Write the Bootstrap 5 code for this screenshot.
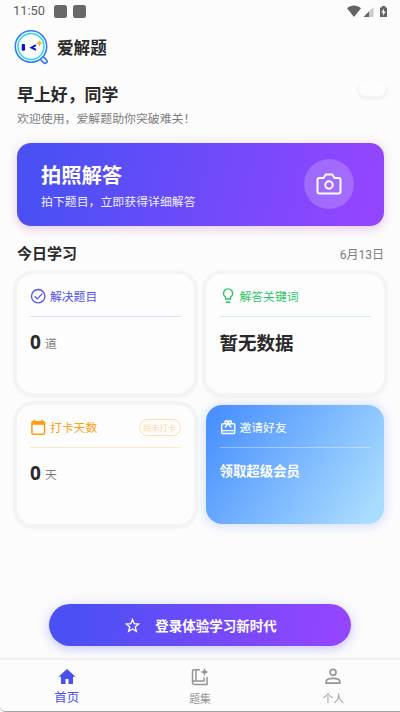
<!DOCTYPE html>
<html lang="zh-CN">
<head>
<meta charset="utf-8">
<meta name="viewport" content="width=device-width, initial-scale=1">
<title>爱解题</title>
<link href="https://cdn.jsdelivr.net/npm/bootstrap@5.3.0/dist/css/bootstrap.min.css" rel="stylesheet">
<style>
html, body { height: 712px; overflow: hidden; }
body { background: #fcfcfc; color: #292929; font-family: "Noto Sans CJK SC", sans-serif; font-size: 12px; line-height: 18px; }
svg { display: block; flex: none; }
.screen { width: 400px; height: 712px; }
.latin { font-family: Roboto, "Noto Sans CJK SC", sans-serif; }
.status { height: 24px; padding: 0 12px 2px 13px; color: #5c5c5c; font-size: 12.8px; }
.status .sq { width: 13px; height: 13px; border-radius: 2.5px; background: #686868; margin-left: 9px; }
.status .sq + .sq { margin-left: 6.5px; }
.brand { height: 46px; padding-left: 13px; gap: 8px; }
.brand-name { font-size: 16.6px; font-weight: 700; line-height: 24px; }
.greet { height: 58px; padding: 12px 14px 0 17px; }
.greet-title { font-size: 16.9px; line-height: 24px; font-weight: 700; }
.muted { color: #7c7c7c; }
.greet-sub { font-size: 11.9px; margin-top: 2.5px; }
.pill { width: 27px; height: 15px; margin-top: -1px; background: #fdfdfd; box-shadow: 0 2px 1px 2px #f4f4f4; }
.hero { height: 83.5px; margin: 14.5px 16px 0 16.5px; padding: 0 30px 0 24.5px; border-radius: 14px; color: #fff;
  background: linear-gradient(103deg, #4a50f4 8%, #9345ff 94%);
  box-shadow: 0 0 12px 3px rgba(70,20,90,.05), 0 4px 8px rgba(190,60,190,.17); }
.hero-title { font-size: 20.3px; line-height: 30px; font-weight: 700; }
.hero-sub { font-size: 11.9px; margin-top: 3px; opacity: .9; }
.lens { width: 50px; height: 50px; background: rgba(255,255,255,.2); }
.section-head { height: 47.5px; padding: 8px 16px 0 17px; }
.section-title { font-size: 15px; line-height: 22px; font-weight: 700; }
.tiles { margin: 0 16px 0 16.5px; display: grid; grid-template-columns: 177.500px 178px; gap: 12px; }
.tile { border-radius: 16px; background: #fdfdfd; padding: 0 13.5px; box-shadow: 0 0 0 4px #f4f4f4, 0 2px 2px 3px #f4f4f4; height: 119px; }
.tile-head { height: 43.5px; padding-top: 2.5px; font-size: 11.8px; border-bottom: 1px solid; gap: 3px; }
.indigo { color: #5351ee; border-color: #dfdefc; }
.green { color: #2cc665; border-color: #cbf3d9; }
.orange { color: #ff9c0d; border-color: #ffe8c8; }
.tag { border: 1px solid #ffdfad; color: #ffd7a0; font-size: 8.4px; line-height: 15px; width: 42px; height: 17px; }
.count { font-size: 19px; line-height: 24px; font-family: "Noto Sans", sans-serif; font-weight: 700; }
.value-row { padding-top: 12.5px; gap: 4px; }
.unit { font-size: 11.8px; position: relative; top: -1px; }
.empty { font-size: 18.5px; line-height: 28px; padding-top: 11px; font-weight: 700; }
.invite { color: #fff; background: linear-gradient(124deg, #488fff 4%, #a9dcff 92%); box-shadow: 0 1px 9px 3px rgba(70,120,255,.17); }
.invite .tile-head { border-color: rgba(255,255,255,.35); }
.invite-text { font-size: 13.4px; line-height: 20px; padding-top: 12px; font-weight: 700; }
.login { width: 302px; height: 42px; margin-top: auto; margin-bottom: 12px; gap: 15px; color: #fff; border: 0; padding: 0 0 0 2px;
  font-size: 13.5px; font-weight: 700; background: linear-gradient(100deg, #4a50f4 8%, #9345ff 94%);
  box-shadow: 0 3px 8px 1px rgba(70,80,245,.2), 0 1px 14px 4px rgba(80,80,245,.05); }
.login:hover { color: #fff; }
.tabs { height: 54px; border-top: 2px solid #f0f0f0; border-bottom: 1px solid #a5a5a5; border-bottom-left-radius: 5px; color: #959595; font-size: 10.8px; padding-top: 7px; }
.tabs .tab { width: 133.33px; gap: 2px; line-height: 19px; }
.tabs .current { color: #4a50f0; font-size: 12.4px; gap: 1px; }
</style>
<script src="https://cdn.jsdelivr.net/npm/bootstrap@5.3.0/dist/js/bootstrap.bundle.min.js"></script>
</head>
<body>
<div class="screen d-flex flex-column">
  <div class="status latin d-flex align-items-center">
    <span>11:50</span>
    <span class="sq"></span><span class="sq"></span>
    <svg class="ms-auto" width="41" height="14" viewBox="0 0 41 14">
      <path d="M0 4.200C4 .5 10 .5 14 4.200L7 13z" fill="#646464"/>
      <path d="M16.500 13 26.500 3v10z" fill="#cbcbcb"/><path d="M16.500 13 22 7.500V13z" fill="#646464"/>
      <path d="M33 3.500h1.800V2h3.400v1.500H40V13h-7z" fill="#646464"/><path d="m37 4.500-2.800 4H36v3.300l2.800-4.300H37z" fill="#fff"/>
    </svg>
  </div>
  <header class="brand d-flex align-items-center">
    <svg width="36" height="36" viewBox="0 0 36 36" fill="none">
      <path d="m27.500 30.500 3.300 3.300c1.800 1.500 4.200-.8 2.800-2.600l-3.200-3.400" stroke="#3478f6" stroke-width="1.700"/>
      <circle cx="18" cy="17.500" r="15.700" fill="#fff" stroke="#3478f6" stroke-width="1.500"/>
      <circle cx="18" cy="17.500" r="13" stroke="#20d9fa" stroke-width="1.500"/>
      <rect x="8.700" y="15" width="3.300" height="6.700" rx="1" fill="#1010dc"/>
      <path d="m23 16-4.500 2.700 4.500 2.100" stroke="#1010dc" stroke-width="2"/>
      <path d="m26.500 11 1 2.300 2.300 1-2.300 1-1 2.300-1-2.300-2.300-1 2.300-1z" fill="#ffac2e"/>
    </svg>
    <span class="brand-name">爱解题</span>
  </header>
  <section class="greet d-flex justify-content-between">
    <div>
      <div class="greet-title">早上好，同学</div>
      <div class="greet-sub muted text-nowrap">欢迎使用，爱解题助你突破难关！</div>
    </div>
    <span class="pill rounded-pill"></span>
  </section>
  <section class="hero d-flex align-items-center justify-content-between">
    <div>
      <div class="hero-title">拍照解答</div>
      <div class="hero-sub">拍下题目，立即获得详细解答</div>
    </div>
    <div class="lens rounded-circle d-flex align-items-center justify-content-center">
      <svg width="26" height="22" viewBox="0 0 26 22" fill="none" stroke="#fff" stroke-width="2" stroke-linejoin="round">
        <path d="M3.500 5h4l2.300-3.500h6.400l2.300 3.500h4Q24.500 5 24.500 7v11.500q0 2-2 2h-19q-2 0-2-2V7q0-2 2-2z"/><circle cx="13" cy="12" r="3.700"/>
      </svg>
    </div>
  </section>
  <div class="section-head d-flex justify-content-between">
    <div class="section-title pt-2">今日学习</div>
    <div class="latin muted pt-2 mt-1">6月13日</div>
  </div>
  <section class="tiles">
    <article class="tile">
      <div class="tile-head indigo d-flex align-items-center">
        <svg width="17" height="17" viewBox="0 0 17 17" fill="none" stroke="currentColor" stroke-width="1.300"><circle cx="8.200" cy="8.200" r="6.700"/><path d="m4.700 8.300 2.600 2.600 5-5.300"/></svg>
        <span>解决题目</span>
      </div>
      <div class="value-row d-flex align-items-center"><span class="count">0</span><span class="unit muted pt-1">道</span></div>
    </article>
    <article class="tile">
      <div class="tile-head green d-flex align-items-center">
        <svg width="17" height="17" viewBox="0 0 17 17" fill="none" stroke="currentColor" stroke-width="1.400"><path d="M5.700 11V9.400a4.600 4.600 0 1 1 4.800 0V11zM5.700 14.300h4.800"/></svg>
        <span>解答关键词</span>
      </div>
      <div class="empty">暂无数据</div>
    </article>
    <article class="tile">
      <div class="tile-head orange d-flex align-items-center">
        <svg width="17" height="17" viewBox="0 0 17 17" fill="none" stroke="currentColor"><rect x="1.900" y="2.800" width="12.600" height="12.500" rx="1" stroke-width="1.500"/><path d="M1.900 4.300h12.600" stroke-width="3"/><path d="M4.400 .8v3M12 .8v3" stroke-width="1.500"/></svg>
        <span>打卡天数</span>
        <span class="tag rounded-pill text-center ms-auto">尚未打卡</span>
      </div>
      <div class="value-row d-flex align-items-center"><span class="count">0</span><span class="unit muted pt-1">天</span></div>
    </article>
    <article class="tile invite">
      <div class="tile-head d-flex align-items-center">
        <svg width="17" height="17" viewBox="0 0 17 17" fill="none" stroke="#fff" stroke-width="1.400"><rect x="1.700" y="4.700" width="13" height="9.800" rx="1"/><path d="M1.700 11.600h13M8.200 4.700 5 8.500M8.200 4.700l3.200 3.800"/><circle cx="6.400" cy="3.200" r="1.500"/><circle cx="10" cy="3.200" r="1.500"/></svg>
        <span>邀请好友</span>
      </div>
      <div class="invite-text">领取超级会员</div>
    </article>
  </section>
  <button class="login btn rounded-pill d-flex align-items-center justify-content-center align-self-center" type="button">
    <svg width="15" height="15" viewBox="0 0 15 15" fill="none" stroke="#fff" stroke-width="1.300"><path d="m7.500 1.500 1.700 4.200 4.500.3-3.500 2.900 1.200 4.400-3.900-2.400-3.900 2.400 1.200-4.400L1.300 6l4.500-.3z"/></svg>
    <span>登录体验学习新时代</span>
  </button>
  <nav class="tabs d-flex">
    <div class="tab current d-flex flex-column align-items-center">
      <svg width="20" height="20" viewBox="0 0 20 20" fill="currentColor"><path d="M10 2 1.500 9.800H4V17h4.500v-5h3v5H16V9.800h2.500z"/></svg>
      <span>首页</span>
    </div>
    <div class="tab d-flex flex-column align-items-center">
      <svg width="20" height="20" viewBox="0 0 20 20" fill="none" stroke="currentColor" stroke-width="1.500"><path d="M10 2.800H4q-1.500 0-1.500 1.500v11.500q0 1.700 1.700 1.700H17V10M6 3v11h8v-3.500M2.700 14.800Q3 14 4.500 14H14"/><path d="m14.500 1 1.200 2.800L18.500 5l-2.800 1.200L14.500 9l-1.200-2.800L10.500 5l2.800-1.200z" fill="currentColor" stroke="none"/></svg>
      <span>题集</span>
    </div>
    <div class="tab d-flex flex-column align-items-center">
      <svg width="20" height="20" viewBox="0 0 20 20" fill="none" stroke="currentColor" stroke-width="1.700"><circle cx="10" cy="5.300" r="3"/><path d="M3.200 16.200v-1.700c0-4.200 13.600-4.200 13.600 0v1.700z"/></svg>
      <span>个人</span>
    </div>
  </nav>
</div>
</body>
</html>
